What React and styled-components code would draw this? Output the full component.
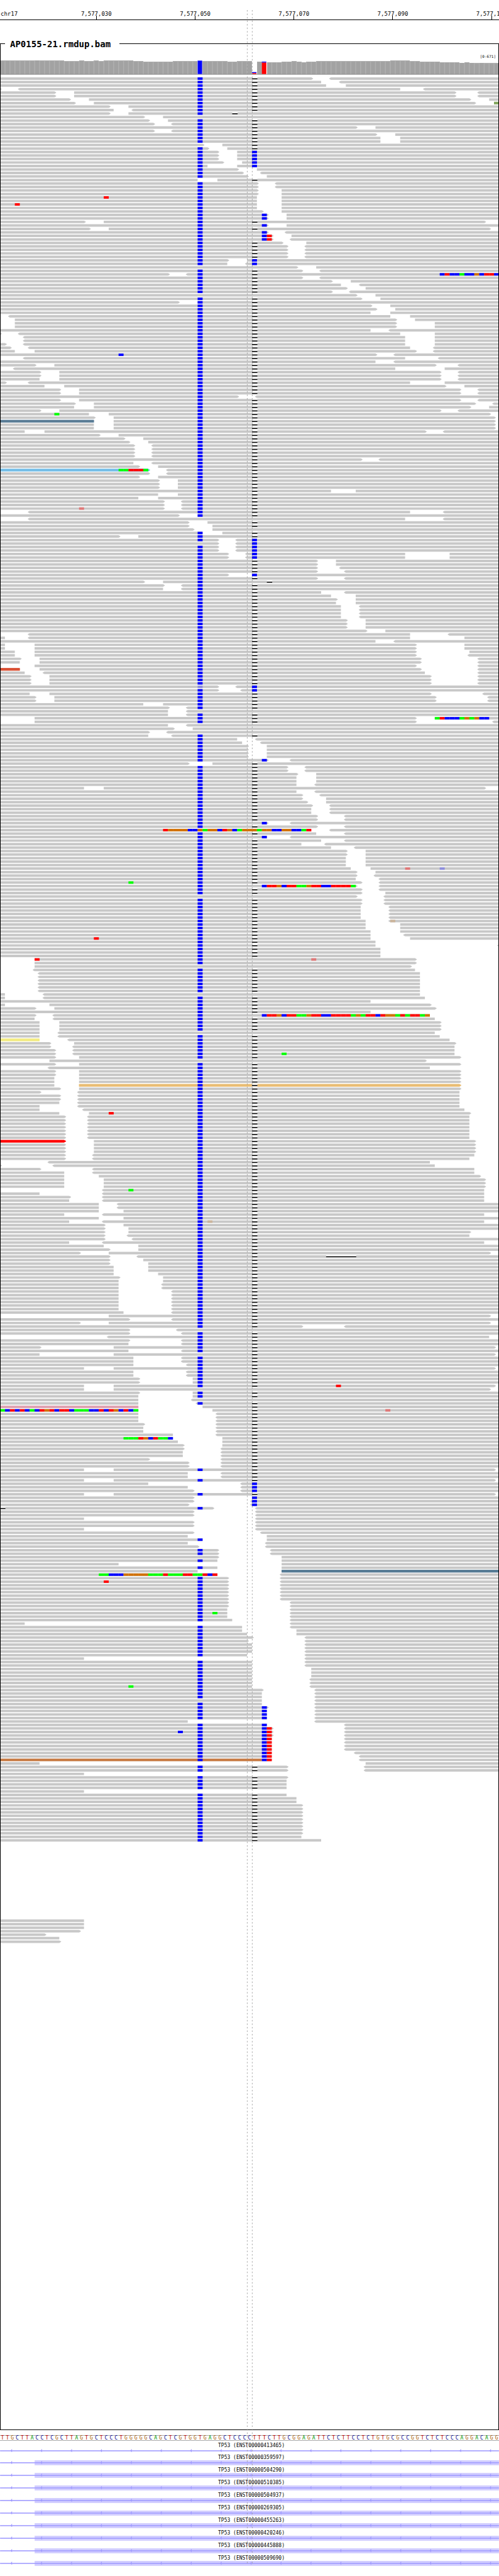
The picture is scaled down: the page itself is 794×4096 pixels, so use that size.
import React from 'react';
import styled, { createGlobalStyle } from 'styled-components';

const GlobalStyle = createGlobalStyle`
  * { box-sizing: border-box; }
  body {
    margin: 0;
    background: #fff;
    color: #000;
    font-family: 'DejaVu Sans Mono', 'Liberation Mono', monospace;
  }
`;

/* ---------- data ---------- */

const BASES = 101;
const BASE_WIDTH = 1000 / BASES;
const ROW_PITCH = 7;

const SEQUENCE =
  'TTGCTTACCTCGCTTAGTGCTCCCTGGGGGCAGCTCGTGGTGAGGCTCCCCTTTCTTGCGGAGATTCTCTTCCTCTGTGCGCCGGTCTCTCCCAGGACAGG';

const TICKS = [
  { base: 19, label: '7,577,030' },
  { base: 39, label: '7,577,050' },
  { base: 59, label: '7,577,070' },
  { base: 79, label: '7,577,090' },
  { base: 99, label: '7,577,110' },
];

const TRANSCRIPTS = [
  { id: 'ENST00000413465', exonStart: null },
  { id: 'ENST00000359597', exonStart: 7 },
  { id: 'ENST00000504290', exonStart: 7 },
  { id: 'ENST00000510385', exonStart: 7 },
  { id: 'ENST00000504937', exonStart: 7 },
  { id: 'ENST00000269305', exonStart: 7 },
  { id: 'ENST00000455263', exonStart: 7 },
  { id: 'ENST00000420246', exonStart: 7 },
  { id: 'ENST00000445888', exonStart: 7 },
  { id: 'ENST00000509690', exonStart: 7 },
];

const MISMATCH = {
  R: '#ff0000',
  G: '#00ff00',
  B: '#0000ff',
  O: '#d17105',
  r: '#df7878',
  f: '#8e8edb',
  o: '#ccb59c',
};

/* Top of each coverage bar, run-length coded; 0 is a base without a grey bar. */
const COVERAGE =
  '121x7 120x1 121x5 122x3 121x1 122x2 121x1 122x1 121x6 122x2 123x6 122x5 0x1 122x5 123x2 122x3 0x1 123x1 0x1 124x3 123x2 122x1 123x1 124x1 123x2 122x15 121x4 122x2 123x4 124x4 125x1 124x1 125x1 126x1 125x1 126x3'
    .split(' ')
    .flatMap((run) => {
      const [top, count] = run.split('x').map(Number);
      return Array(count).fill(top);
    });

const ALLELES = [
  { base: 40, from: 121, to: 148, color: '#0000ff' },
  { base: 51, from: 144, to: 146, color: '#0000ff' },
  { base: 51, from: 146, to: 148, color: '#ff0000' },
  { base: 53, from: 123, to: 125, color: '#0000ff' },
  { base: 53, from: 125, to: 148, color: '#ff0000' },
];

/*
 * One pileup row per entry, "|" between rows, "*n" repeats a row.
 *   a-b        gap between reads; > and < mark the reads' arrow tips
 *   n, b, d    no variant at all, none at base 40, no deletion at base 51
 *   c          C instead of the deletion at base 51
 *   R21        mismatch at a base, Da+n deletion of n bases
 *   @89BRB     soft-clipped bases from 89, #hex:a-b tinted read
 */
const PILEUP = `
63>-<67|65-<69|66-70|0>-<4 81-<86|11>-15 92>-<97*2|14>-18 95>-99|15>-19 96>-100 #83a75f:100-101|22>-26|23-<27
22>-26 d D47+1|29>-33 n|30>-34|31>-<35|72>-76|31>-<35|76>-80|77-81*2|41>-45 b|42>-46|44>-48 c*3|45>-49 c|42-48 c
48>-52|49>-<53|50>-54|40-44|d 52>-<56*2|d 52>-57*2|d 52-57 R21|d 52-57|d 52-57 R3|d 52-57
d 53>-57|d 54>-58 B53*2|17>-21 98>-101|d 54>-58 B53|18>-22 99>-101|d B53 54>-<58|d B53 R54 55>-59|d B53 R54 55>-<59
57>-62|58>-<62*4|46>-50 c|46-<50 c|n 60>-64|61>-<65|34>-<38 @89BRBBGBBOBRRB|61>-<65|67>-71|69-<73|70>-74|67>-<71
n 72>-76|73>-77|36>-40|75>-79|76>-80|75-79|0-<2 79-83|0-3 80>-84|0-3 80>-88*2|75-<79|0>-<4 81-88|0-<5 82-88*2
1>-<5 82-88|2>-<6 83-<88|3-7 84>-<88|B24 76>-<80|0-<5 82-<89|76-<80|7>-11 88>-<93|0-<3 80-90|8>-12 89>-<93*2
8-12 89>-<93|1>-<6 83-90|9-13 90>-94|12>-16 93>-<97*2|48>-<52|12>-16 93>-<97|15>-19 96>-<100|15-19 95>-99
8>-12 89>-<93|G11 18-22 99>-101|19>-23 100>-101|#5a7d96:0-19 19-23 100>-101|19-23 100>-101*2|5-9 86>-<90|20>-24
25>-29|26>-30|27>-<31*4|73>-<77|27-<31|28>-32|#74bee8:0-30 @24GGRRRG 30>-<34|30>-<34|28>-32|32>-36*3|67-72|32-36
28-32|33>-<37*2|33>-<37 r16|0-<6 83-<90|36>-40|n 0-<6 82-<90|38>-42|38>-43|39>-43 d|41-45|24>-28|44>-<48 c
44>-<48 c b|44>-<48 c*2|46>-<50 c 82-91*2|64>-68*2|64>-<69|64>-<70|46>-51 c|64>-<70|29>-33 d D54+1|33>-<37|33-<37
65-<70|67-72|68>-72|68-72|69-<73*4|70>-74*3|74>-78|0-<6 83-<91|1-<6 83-94|76-<80|1-7 84>-94*2|3-7 84>-95|3-7 84>-<95
4>-8 85>-<97|4-8 85>-<97|0-7 84>-<97|#d94f33:0-4 4-8 85>-<97|5-<9 86-<97|6>-10 87>-<97*3|b f40 44>-<48 c|44>-<49 c
6-10 87>-<98|7>-11 88>-<99*2|29-33|34>-<38|n 34-<38|34-<38|0-7 84>-88 @88GRBBBGOGOBB|0-7 84>-<100|n 34-<38|n 35>-39
n 30>-<34|30-<35|48-<52|49-<53|50>-54*4|d B53 54>-<59|38>-43|58>-<62*2|60>-64|60-64*2|60-<64|17-21 98>-101|60-<64
61>-<65|61>-66|62>-66|63>-<67|63-<67*2|64>-<70*2|d B53 54>-<59|64>-<70|b d @33ROOOOBBOGOOBROBGOOOGOOBBOOBBGR 63-<67
64-<70|d B53 54-<59|65-<70|61-<66|67-<72|70>-74*2|70-74*3|71-75 r82 f89|72>-76|72>-<76|72-<77|G26 73>-<77
d @53BRROBRRGGORRBBRRRRG 72>-<77|73>-<77|73>-78|n 72>-<78|73>-<78*2|73-<79*4|74-<79 o79|74-81*2|75-81|75-<82
75-83 R19|76-101|76-<101|77-101*3|d 0-7 R7 r63 84>-101|d 0-7 84>-101|n 0-7 83>-101|0-<7 84-101|0-<8 85-101*6
n 1-<9 85-101|1-<9 86-101|75-101|1-10 87>-101|7>-11 88>-101|75-101|d 7>-<11 87-101 @53BRROBRRGGORRBBRRRRGOGRRBROOGRGRRGO
7-<11 88-101|8-12 89>-101*3|n 8-<12 88-101|8-<12 89-101|#f3ec82:0-8 8-<14 91-101|10>-15 92>-101|10>-<15 92-101
11>-<15 92-101|11>-<15 92-101 G57|11>-16 93>-101|n 0-10 86>-101|11>-16 93>-101|0-<10 87-101|11>-16 93>-101*2
11-16 93>-101*2|#e9bd74:16-93 11-16 93>-101|12>-16 93>-101|8>-<16 93-101|12>-<16 93-101*2|12-<16 93-101|8-<16 93-101
8-<17 94-101|12-18 R22 95>-101|13>-<18 95-101*7|#ff0000:0-13 13>-19 96>-101|13>-19 96>-101*3|13>-<19 96-101
13>-<19 95-101|0-<10 87-101|0>-<11 88-101|8>-<19 96-101|13-<19 96-101|13-20 97>-101|13-21 98>-101*3|0-<21 G26 98-101
8-<21 98-101|14>-<21 98-101|14-<21 98-101|20-<24*2|20-25|13-<21 98-101|20-25|14-<21 o42 98-101|21>-25|21>-26
21>-26 95>-101|21>-<26 95-101|21>-<27|14-<21 98-101|21-28|22>-28|16>-22 99>-101|22>-<28 D66+6|22>-29|22>-30
23-30*2|23-32|24>-33|24-33|24-<33*2|24-<35*6|25-<35|0-22 99>-101|26>-<35|16>-22 99>-101|61>-<70|n 26>-<36|26>-<37
0-<22 99-101|26>-<37|26-<37|8>-23 100>-101|26-<37|b 8-23 100>-101|27-<37*2|27-<38|17-23 100>-101|27-<38*2|28>-39*2
17-23 R68 100>-101|n 17-23 99>-101|28>-39|28-39|n 28-<39|28-<40|#dfa3b2:0-28 28-41
@0GBRBRBGBRORBRRBGGGBBRBROBRBG 28-43 r78|28-<44*3|29>-<44|29-<44*2|35-<44|@25GGGROBRGGB 35-45|36-45|37>-45
37>-<45|37-<45*2|30>-<45|38>-<45*2|17-23 100>-101|38-<45*2|17-23 100>-101|30-<49 c|38-<49 c|39>-<49 c|17-23 100>-101
39>-51 c|39>-<51 c|38>-<51 c|D0+1 43>-<52|39>-<52*2|17-<52|39>-<52*2|17-<52|39>-<53|38-54|41-54|38-<54|40>-<54
44>-<55*2|b 44>-57|44-57|24-57|44-57|40-57 #557a93:57-101|b @20GGBBBOOOOOGGGRGGGRRGGRBR 44-<57|46>-<57|46>-<57 R21
46>-<57*5|46>-<59*2|46-<59|46-<59 G43|46-<59|47-<59|5-<59|49-<59|49-60|50-60|51>-<62|50>-<62|51-<62*3|50-<62|17-<62
51-<62*2|51-63*3|51-<63*2|51-<63 G26|d 53>-<64|d 53-<64*2|n 53-<64|d 53-<64|d B53 54>-<64|d B53 54-<64*3|38-<64
d B53 54-<70|d B53 R54 55>-<70|d B53 R54 55>-<70 B36|d B53 R54 55>-<70|d B53 R54 55-<70*4|d B53 R54 55-<72
d B53 R54 55-<73|#c87941:0-53 d B53 R54 55-<73|8-74|58>-<74*2|17-101|58>-101|58-101*3|17-101|58-101|60-101*2
61>-101*9|61-101|65-101|0-101*22|17-101*3|16>-101|9>-101|12-101|12>-101
`;

function parseRow(text) {
  const row = { gaps: [], marks: [], deletions: [], tints: [] };
  let variant = true;
  let deletion = true;
  for (const token of text.split(' ')) {
    let m;
    if ((m = token.match(/^(\d+)(>?)-(<?)(\d+)$/))) {
      row.gaps.push({ from: +m[1], to: +m[4], tipRight: !!m[2], tipLeft: !!m[3] });
    } else if ((m = token.match(/^@(\d+)(\w+)$/))) {
      [...m[2]].forEach((base, i) => row.marks.push({ base: +m[1] + i, color: MISMATCH[base] }));
    } else if ((m = token.match(/^(#\w+):(\d+)-(\d+)$/))) {
      row.tints.push({ color: m[1], from: +m[2], to: +m[3] });
    } else if ((m = token.match(/^D(\d+)\+(\d+)$/))) {
      row.deletions.push({ base: +m[1], length: +m[2] });
    } else if ((m = token.match(/^([A-Za-z])(\d+)$/))) {
      row.marks.push({ base: +m[2], color: MISMATCH[m[1]] });
    } else if (token === 'n') {
      variant = false;
      deletion = false;
    } else if (token === 'b') {
      variant = false;
    } else if (token === 'd') {
      deletion = false;
    } else if (token === 'c') {
      deletion = false;
      row.marks.push({ base: 51, color: MISMATCH.B });
    }
  }
  const covered = (base) => !row.gaps.some((g) => base >= g.from && base < g.to);
  if (variant && covered(40)) row.marks.unshift({ base: 40, color: MISMATCH.B });
  if (deletion && covered(51)) row.deletions.push({ base: 51, length: 1 });

  row.reads = [];
  let start = 0;
  let tipLeft = false;
  for (const gap of [...row.gaps, { from: BASES, to: BASES }]) {
    if (gap.from > start || gap.tipRight || tipLeft) {
      row.reads.push({ from: start, to: gap.from, tipLeft, tipRight: gap.tipRight });
    }
    start = gap.to;
    tipLeft = gap.tipLeft;
  }
  return row;
}

const ROWS = PILEUP.trim()
  .split(/[|\n]/)
  .flatMap((entry) => {
    const [text, count = '1'] = entry.split('*');
    return Array(Number(count)).fill(parseRow(text));
  });

/* ---------- styled parts ---------- */

const Page = styled.main`
  position: relative;
  width: 100%;
  overflow: hidden;
  padding-bottom: 15px;
`;

const Ruler = styled.header`
  display: grid;
  grid-template-columns: repeat(${BASES}, minmax(0, 1fr));
  padding-top: 19px;
  border-bottom: 1px solid #000;
  font-size: 9px;
  line-height: 6px;
  white-space: nowrap;
`;

const Chromosome = styled.span`
  grid-row: 1;
  grid-column: 1 / span 8;
  padding-left: 1px;
`;

const Tick = styled.span`
  grid-row: 1;
  grid-column: ${(p) => p.$base + 1};
  display: flex;
  flex-direction: column;
  align-items: center;

  &::after {
    content: '';
    width: 1px;
    height: 6px;
    background: #000;
  }
`;

const Panel = styled.section`
  position: relative;
  margin-top: 28px;
  padding-bottom: 772px;
  border-bottom: 1px solid #000;

  &::after {
    content: '';
    position: absolute;
    inset: 9px 0 0;
    border: solid #000;
    border-width: 0 1px;
    pointer-events: none;
  }
`;

const TitleBar = styled.div`
  display: flex;
  align-items: center;
  gap: 8px;
  height: 19px;

  &::before,
  &::after {
    content: '';
    height: 1px;
    background: #000;
  }
  &::before { width: 8px; }
  &::after { flex: 1; margin-left: 6px; }
`;

const Title = styled.h1`
  margin: 0;
  font-size: 14px;
  line-height: 16px;
  font-weight: bold;
`;

const Range = styled.div`
  padding: 7px 5px 0 0;
  font-size: 6px;
  line-height: 8px;
  text-align: right;
`;

const Chart = styled.svg`
  display: block;
  width: 100%;
  height: auto;
`;

const Guides = styled.svg`
  position: absolute;
  top: 16px;
  left: 0;
  width: 100%;
  height: auto;
  pointer-events: none;
`;

const Sequence = styled.div`
  display: grid;
  grid-template-columns: repeat(${BASES}, minmax(0, 1fr));
  margin-top: 8px;
  border: solid #aaa;
  border-width: 1px 0;
  font-size: 8px;
  line-height: 7px;
`;

const BASE_COLORS = { A: '#009600', C: '#00008c', G: '#a85a00', T: '#b40000' };

const Base = styled.span`
  color: ${(p) => BASE_COLORS[p.$base]};
  text-align: center;
`;

const TranscriptList = styled.ul`
  margin: 0;
  padding: 0;
  list-style: none;
`;

const TranscriptName = styled.div`
  padding: 4px 0 0 6px;
  font-size: 8px;
  line-height: 8px;
  text-align: center;
`;

/* ---------- drawings ---------- */

const px = (base) => base * BASE_WIDTH;

function readPath({ from, to, tipLeft, tipRight }) {
  const a = px(from);
  const b = px(to);
  return [
    `M${a} 0H${b}`,
    tipRight ? `L${b + 2} 1L${b + 4} 2.5L${b + 2} 4` : '',
    `L${b} 5H${a}`,
    tipLeft ? `L${a - 2} 4L${a - 4} 2.5L${a - 2} 1` : '',
    'Z',
  ].join('');
}

function PileupRow({ row, index }) {
  return (
    <g transform={`translate(0 ${index * ROW_PITCH})`}>
      {row.reads.map((read, i) => {
        const tint = row.tints.find((t) => t.from === read.from && t.to === read.to);
        return <path key={i} d={readPath(read)} fill={tint ? tint.color : '#c8c8c8'} />;
      })}
      {row.tints.map((t, i) => (
        <rect key={i} x={px(t.from)} width={px(t.to - t.from)} height="5" fill={t.color} />
      ))}
      {row.marks.map((m, i) => (
        <rect key={i} x={px(m.base)} width="10" height="5" fill={m.color} />
      ))}
      {row.deletions.map((d, i) => (
        <g key={i}>
          <rect x={px(d.base)} width={px(d.length) + 1} height="5" fill="#fff" />
          <rect x={px(d.base)} y="2" width={px(d.length) + 1} height="2" />
        </g>
      ))}
    </g>
  );
}

function Coverage() {
  return (
    <Chart viewBox="0 118 1000 36" role="img" aria-label="Coverage">
      {COVERAGE.map(
        (top, i) =>
          top > 0 && (
            <g key={i}>
              <rect x={px(i)} y={top} width={px(1)} height={148 - top} fill="#b0b0b0" shapeRendering="crispEdges" />
              <rect x={px(i) + 1} y={top + 1} width="8" height={147 - top} fill="#a2a2a2" />
            </g>
          )
      )}
      {ALLELES.map((a, i) => (
        <rect key={i} x={px(a.base)} y={a.from} width="9" height={a.to - a.from} fill={a.color} />
      ))}
      <rect y="148" width="1000" height="1" fill="#787878" />
    </Chart>
  );
}

function TranscriptModel({ exonStart }) {
  return (
    <Chart viewBox="0 0 1000 10" aria-hidden="true">
      {exonStart !== null && (
        <rect x={px(exonStart)} width={1000 - px(exonStart)} height="10" fill="#d2ceff" />
      )}
      <rect y="4" width="1000" height="2" fill="#a09bff" />
      {Array.from({ length: 17 }, (_, i) => (
        <path key={i} d={`M${21 + i * 60} 5L${24 + i * 60} 1V8Z`} fill="#a09bff" />
      ))}
    </Chart>
  );
}

export default function App() {
  return (
    <Page>
      <GlobalStyle />
      <Ruler>
        <Chromosome>chr17</Chromosome>
        {TICKS.map((t) => (
          <Tick key={t.base} $base={t.base}>{t.label}</Tick>
        ))}
      </Ruler>

      <Panel>
        <TitleBar>
          <Title>AP0155-21.rmdup.bam</Title>
        </TitleBar>
        <Range>[0-671]</Range>
        <Coverage />
        <Chart viewBox={`0 0 1000 ${ROWS.length * ROW_PITCH}`} role="img" aria-label="Aligned reads">
          {ROWS.map((row, i) => (
            <PileupRow key={i} row={row} index={i} />
          ))}
        </Chart>
      </Panel>

      <Sequence>
        {[...SEQUENCE].map((base, i) => (
          <Base key={i} $base={base}>{base}</Base>
        ))}
      </Sequence>

      <TranscriptList>
        {TRANSCRIPTS.map((t) => (
          <li key={t.id}>
            <TranscriptName>TP53 ({t.id})</TranscriptName>
            <TranscriptModel exonStart={t.exonStart} />
          </li>
        ))}
      </TranscriptList>

      <Guides viewBox="0 0 1000 5113" aria-hidden="true">
        <g stroke="#969696" strokeDasharray="3 4">
          <path d="M495.5 0V5113" />
          <path d="M505.5 0V5113" />
        </g>
      </Guides>
    </Page>
  );
}
